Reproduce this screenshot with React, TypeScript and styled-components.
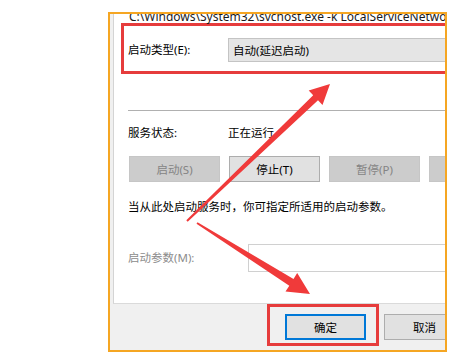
import React from "react";
import styled, { createGlobalStyle } from "styled-components";

const GlobalStyle = createGlobalStyle`
  html, body {
    margin: 0;
    padding: 0;
    background: #ffffff;
  }
  body {
    font-family: "Noto Sans", "Noto Sans CJK SC", sans-serif;
  }
`;

const Page = styled.div`
  position: relative;
  width: 467px;
  height: 352px;
  padding: 12px 0 0 108px;
  box-sizing: border-box;
  overflow: hidden;
`;

const Frame = styled.div`
  width: 339px;
  height: 340px;
  box-sizing: border-box;
  border: 2px solid #f5a623;
  background: #f0f0f0;
  overflow: hidden;
`;

const Panel = styled.div`
  width: 440px;
  height: 293px;
  box-sizing: border-box;
  margin-left: 3px;
  padding-left: 7px;
  background: #ffffff;
  border-left: 1px solid #d4d4d4;
  border-bottom: 1px solid #dadada;
`;

const PathText = styled.div`
  margin-top: -3px;
  padding-left: 8px;
  height: 12px;
  line-height: 12px;
  font-size: 12px;
  color: #1a1a1a;
  white-space: nowrap;
`;

const Highlight = styled.div`
  display: flex;
  align-items: center;
  border: 3px solid #e63c3c;
  padding: 12px 0 9px 4px;
`;

const Row = styled.div<{ $top: number }>`
  display: flex;
  align-items: center;
  margin-top: ${(p) => p.$top}px;
  padding-left: 7px;
`;

const Label = styled.span<{ $muted?: boolean }>`
  width: 100px;
  flex-shrink: 0;
  font-size: 11.5px;
  line-height: 16px;
  color: ${(p) => (p.$muted ? "#8c8c8c" : "#000000")};
  white-space: nowrap;
`;

const Combo = styled.div`
  width: 300px;
  height: 24px;
  box-sizing: border-box;
  padding-left: 4px;
  display: flex;
  align-items: center;
  background: #e5e5e5;
  border: 1px solid #c4c4c4;
  font-size: 11.5px;
  color: #000000;
`;

const Separator = styled.div`
  margin: 36px 0 0 7px;
  height: 1px;
  background: #b0b0b0;
`;

const Value = styled.span`
  font-size: 11.5px;
  line-height: 16px;
  color: #000000;
`;

const ButtonRow = styled.div`
  display: flex;
  gap: 9px;
  margin-top: 15px;
  padding-left: 8px;
`;

const Button = styled.div<{ $disabled?: boolean }>`
  width: 91px;
  height: 26px;
  flex-shrink: 0;
  box-sizing: border-box;
  display: flex;
  align-items: center;
  justify-content: center;
  font-size: 11.5px;
  background: ${(p) => (p.$disabled ? "#cccccc" : "#e1e1e1")};
  border: 1px solid ${(p) => (p.$disabled ? "#c6c6c6" : "#adadad")};
  color: ${(p) => (p.$disabled ? "#848484" : "#000000")};
`;

const Hint = styled.div`
  margin-top: 17px;
  padding-left: 7px;
  font-size: 11.5px;
  line-height: 16px;
  color: #000000;
  white-space: nowrap;
`;

const ParamInput = styled.div`
  width: 300px;
  height: 28px;
  margin-left: 20px;
  box-sizing: border-box;
  background: #ffffff;
  border: 1px solid #d0d0d0;
`;

const Footer = styled.div`
  display: flex;
  align-items: flex-start;
  padding-left: 157px;
`;

const FooterMark = styled.div`
  border: 3px solid #e63c3c;
  padding: 7px 10px 3px 15px;
`;

const DialogButton = styled.div<{ $primary?: boolean; $top?: number; $left?: number }>`
  width: 81px;
  height: 26px;
  flex-shrink: 0;
  box-sizing: border-box;
  margin-top: ${(p) => p.$top ?? 0}px;
  margin-left: ${(p) => p.$left ?? 0}px;
  display: flex;
  align-items: center;
  justify-content: center;
  font-size: 11.5px;
  color: #000000;
  background: #e1e1e1;
  border: ${(p) => (p.$primary ? "2px solid #0078d7" : "1px solid #adadad")};
`;

const Arrows = styled.svg`
  position: absolute;
  left: 0;
  top: 0;
  pointer-events: none;
`;

const ARROW_UP =
  "186.3,220.3 313.2,95.3 308.7,90.6 330,84 322.5,105 318,100.3 187.7,221.7";
const ARROW_DOWN =
  "197.5,222.2 293.5,278.9 297.2,273 310,294 285.5,291.6 289.3,285.7 196.5,223.8";

export default function App() {
  return (
    <>
      <GlobalStyle />
      <Page>
        <Frame>
          <Panel>
            <PathText>C:\Windows\System32\svchost.exe -k LocalServiceNetwork</PathText>
            <Highlight>
              <Label>启动类型(E):</Label>
              <Combo>自动(延迟启动)</Combo>
            </Highlight>
            <Separator />
            <Row $top={14}>
              <Label>服务状态:</Label>
              <Value>正在运行</Value>
            </Row>
            <ButtonRow>
              <Button $disabled>启动(S)</Button>
              <Button>停止(T)</Button>
              <Button $disabled>暂停(P)</Button>
              <Button $disabled />
            </ButtonRow>
            <Hint>当从此处启动服务时，你可指定所适用的启动参数。</Hint>
            <Row $top={29}>
              <Label $muted>启动参数(M):</Label>
              <ParamInput />
            </Row>
          </Panel>
          <Footer>
            <FooterMark>
              <DialogButton $primary>确定</DialogButton>
            </FooterMark>
            <DialogButton $top={10} $left={5}>取消</DialogButton>
          </Footer>
        </Frame>
        <Arrows width="467" height="352" viewBox="0 0 467 352">
          <polygon points={ARROW_UP} fill="#f03a3a" />
          <polygon points={ARROW_DOWN} fill="#f03a3a" />
        </Arrows>
      </Page>
    </>
  );
}
